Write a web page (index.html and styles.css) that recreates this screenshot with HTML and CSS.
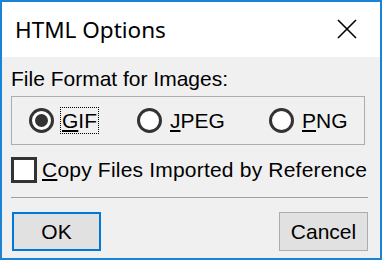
FILE: index.html
```html
<!DOCTYPE html>
<html>
  <head>
    <meta charset="utf-8">
    <title>HTML Options</title>
    <link rel="stylesheet" href="styles.css">
  </head>
  <body>
    <div class="window">
      <div class="titlebar">
        <h1>HTML Options</h1>
        <svg class="close" width="20" height="20" viewBox="0 0 20 20">
          <path d="M1 1 L19 19 M19 1 L1 19" stroke="#000" stroke-width="1.6" fill="none"/>
        </svg>
      </div>
      <div class="content">
        <p class="label">File Format for Images:</p>
        <div class="group">
          <label class="option gif"><span class="radio checked"></span><span class="text focus"><u>G</u>IF</span></label>
          <label class="option jpeg"><span class="radio"></span><span class="text"><u>J</u>PEG</span></label>
          <label class="option png"><span class="radio"></span><span class="text"><u>P</u>NG</span></label>
        </div>
        <label class="check"><span class="box"></span><span class="text"><u>C</u>opy Files Imported by Reference</span></label>
        <hr>
        <div class="buttons">
          <button class="default">OK</button>
          <button>Cancel</button>
        </div>
      </div>
    </div>
  </body>
</html>
```

FILE: styles.css
```css
* { box-sizing: border-box; }
body {
  margin: 0;
  font-family: "Liberation Sans", Arial, sans-serif;
  font-size: 21px;
  color: #000;
}
.window {
  width: 382px;
  height: 260px;
  border: 2px solid #1883d7;
  background: #f0f0f0;
  display: flex;
  flex-direction: column;
}
.titlebar {
  height: 55px;
  background: #fff;
  display: flex;
  align-items: center;
  padding: 0 23px 0 13px;
}
.titlebar h1 {
  flex: 1;
  margin: 0;
  font-family: "Noto Sans", "Open Sans", sans-serif;
  font-weight: normal;
  font-size: 22.5px;
}
.close { margin-bottom: 2px; }
.content { padding: 0 12px 0 9px; }
.label {
  margin: 10px 0 0;
  line-height: 24px;
}
.group {
  margin-top: 5px;
  width: 354px;
  height: 49px;
  border: 1px solid #adadad;
  padding-left: 17px;
  display: flex;
  align-items: center;
}
.option {
  display: flex;
  align-items: center;
}
.gif { width: 108px; }
.jpeg { width: 132px; }
.radio {
  width: 25px;
  height: 25px;
  border: 3px solid #333;
  border-radius: 50%;
  background: #fff;
  display: flex;
  align-items: center;
  justify-content: center;
}
.radio.checked::after {
  content: "";
  width: 13px;
  height: 13px;
  border-radius: 50%;
  background: #333;
}
.option .text {
  margin-left: 6px;
  padding: 0 1px;
  line-height: 25px;
  border: 1px solid transparent;
}
.option .focus { border: 1px dotted #000; }
.check {
  margin-top: 12px;
  display: flex;
  align-items: center;
}
.box {
  width: 26px;
  height: 26px;
  border: 3px solid #333;
  background: #fff;
}
.check .text {
  margin-left: 5px;
  line-height: 24px;
  white-space: nowrap;
  letter-spacing: 0.2px;
}
hr {
  margin: 14px 0 0;
  height: 1px;
  border: 0;
  background: #a0a0a0;
}
.buttons {
  margin-top: 14px;
  display: flex;
  justify-content: space-between;
  padding-left: 1px;
}
button {
  width: 89px;
  height: 39px;
  font: inherit;
  color: #000;
  background: #e1e1e1;
  border: 1px solid #adadad;
  padding: 0;
}
button.default { border: 2px solid #0078d7; }
```
